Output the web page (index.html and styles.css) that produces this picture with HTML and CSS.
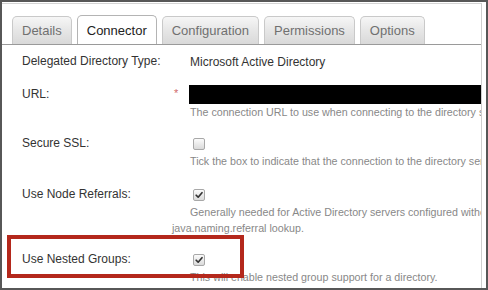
FILE: index.html
```html
<!DOCTYPE html>
<html lang="en">
<head>
  <meta charset="UTF-8">
  <title>Directory - Connector</title>
  <link rel="stylesheet" href="styles.css">
</head>
<body>
  <div class="frame">
    <div class="panel">
      <div class="tabs">
        <div class="tab">Details</div>
        <div class="tab active">Connector</div>
        <div class="tab">Configuration</div>
        <div class="tab">Permissions</div>
        <div class="tab">Options</div>
      </div>
      <div class="form">
        <div class="label first">Delegated Directory Type:</div>
        <div class="value first">
          <div class="field">Microsoft Active Directory</div>
        </div>

        <div class="label">URL:</div>
        <div class="value">
          <div class="field required">
            <span class="req">*</span>
            <div class="redacted"></div>
          </div>
          <div class="help">The connection URL to use when connecting to the directory server, e.g. ldap://example.com:389</div>
        </div>

        <div class="label">Secure SSL:</div>
        <div class="value">
          <div class="field"><span class="check"></span></div>
          <div class="help">Tick the box to indicate that the connection to the directory server is secured with SSL.</div>
        </div>

        <div class="label spaced">Use Node Referrals:</div>
        <div class="value spaced">
          <div class="field">
            <span class="check">
              <svg viewBox="0 0 12 12" width="12" height="12"><path d="M2.6 6.3 L5 8.6 L9.6 3.2" fill="none" stroke="#333" stroke-width="2" stroke-linecap="round" stroke-linejoin="round"/></svg>
            </span>
          </div>
          <div class="help indent">Generally needed for Active Directory servers configured without DNS, to prevent a<br>java.naming.referral lookup.</div>
        </div>

        <div class="label">Use Nested Groups:</div>
        <div class="value">
          <div class="field">
            <span class="check">
              <svg viewBox="0 0 12 12" width="12" height="12"><path d="M2.6 6.3 L5 8.6 L9.6 3.2" fill="none" stroke="#333" stroke-width="2" stroke-linecap="round" stroke-linejoin="round"/></svg>
            </span>
          </div>
          <div class="help">This will enable nested group support for a directory.</div>
        </div>
      </div>
    </div>
    <div class="highlight"></div>
  </div>
</body>
</html>
```

FILE: styles.css
```css
body {
  margin: 0;
  background: #fff;
  font-family: "Liberation Sans", Arial, sans-serif;
}
.frame {
  position: relative;
  width: 488px;
  height: 290px;
  box-sizing: border-box;
  border: 2px solid #575757;
  padding: 1px 4px 0 0;
  background: #fff;
  overflow: hidden;
}
.panel {
  height: 100%;
  border-top: 1px solid #d4d4d4;
  border-right: 1px solid #cfcfcf;
  overflow: hidden;
}
.tabs {
  display: flex;
  align-items: flex-end;
  gap: 5px;
  padding: 11px 0 0 10px;
  border-bottom: 1px solid #9a9a9a;
}
.tab {
  height: 28px;
  box-sizing: border-box;
  padding: 0 9px;
  line-height: 27px;
  font-size: 13px;
  color: #707070;
  border: 1px solid #c9c9c9;
  border-bottom: none;
  border-radius: 5px 5px 0 0;
  background: linear-gradient(to bottom, #f6f6f6 0%, #e6e6e6 50%, #d9d9d9 100%);
}
.tab.active {
  height: 29px;
  line-height: 29px;
  color: #222;
  border-color: #b4b4b4;
  background: #fff;
}
.form {
  display: grid;
  grid-template-columns: 150px 1fr;
  row-gap: 14px;
  padding: 7px 0 0 20px;
}
.label {
  font-size: 12px;
  line-height: 19px;
  color: #333;
  white-space: nowrap;
}
.spaced {
  margin-top: 2px;
}
.value {
  min-width: 0;
}
.field {
  display: flex;
  align-items: center;
  height: 19px;
  padding-left: 18px;
  font-size: 12px;
  color: #333;
  white-space: nowrap;
}
.field.required {
  padding-left: 0;
}
.req {
  width: 17px;
  padding-left: 2px;
  box-sizing: border-box;
  align-self: flex-start;
  margin-top: 2px;
  font-size: 11px;
  color: #d06a6a;
}
.redacted {
  flex: 1;
  height: 19px;
  background: #000;
}
.check {
  display: inline-flex;
  align-items: center;
  justify-content: center;
  width: 12px;
  height: 12px;
  margin-left: 3px;
  box-sizing: border-box;
  border: 1px solid #a8a8a8;
  border-radius: 2px;
  background: linear-gradient(to bottom, #fbfbfb, #dadada);
}
.check svg {
  width: 10px;
  height: 10px;
}
.help {
  padding-left: 18px;
  font-size: 10.7px;
  line-height: 16px;
  color: #888;
  white-space: nowrap;
}
.help.indent {
  padding-left: 0;
  text-indent: 18px;
}
.highlight {
  position: absolute;
  left: 5px;
  top: 233px;
  width: 237px;
  height: 43px;
  box-sizing: border-box;
  border: 4px solid #b4281c;
}
```
